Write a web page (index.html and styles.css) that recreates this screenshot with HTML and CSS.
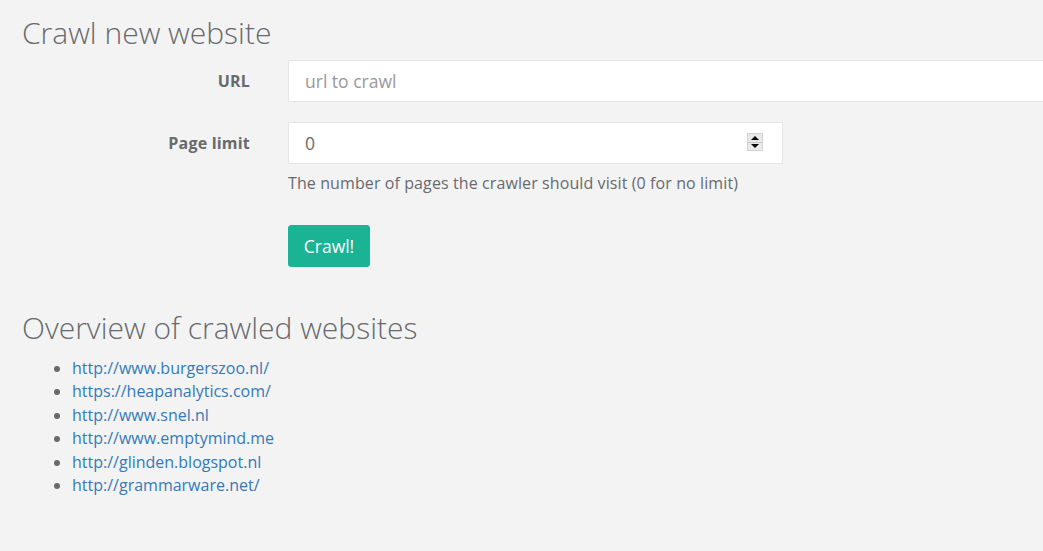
FILE: index.html
```html
<!DOCTYPE html>
<html>
<head>
<meta charset="utf-8">
<link rel="stylesheet" href="styles.css">
</head>
<body>
<div class="page">
  <h1 class="title">Crawl new website</h1>
  <form class="crawl-form">
    <div class="row">
      <label class="label" for="url">URL</label>
      <div class="field">
        <input class="control control-wide" id="url" type="text" placeholder="url to crawl">
      </div>
    </div>
    <div class="row">
      <label class="label" for="limit">Page limit</label>
      <div class="field">
        <div class="num-wrap">
          <input class="control control-num" id="limit" type="number" value="0">
          <span class="spinner" aria-hidden="true">
            <span class="spin-up"></span>
            <span class="spin-down"></span>
          </span>
        </div>
        <p class="help">The number of pages the crawler should visit (0 for no limit)</p>
      </div>
    </div>
    <div class="row">
      <div></div>
      <div class="field">
        <button class="btn" type="button">Crawl!</button>
      </div>
    </div>
  </form>
  <h1 class="title title-2">Overview of crawled websites</h1>
  <ul class="sites">
    <li><a href="#">http://www.burgerszoo.nl/</a></li>
    <li><a href="#">https://heapanalytics.com/</a></li>
    <li><a href="#">http://www.snel.nl</a></li>
    <li><a href="#">http://www.emptymind.me</a></li>
    <li><a href="#">http://glinden.blogspot.nl</a></li>
    <li><a href="#">http://grammarware.net/</a></li>
  </ul>
</div>
</body>
</html>
```
FILE: styles.css
```css
html, body {
  margin: 0;
  padding: 0;
  overflow: hidden;
  background: #f3f3f4;
}
body {
  font-family: "Open Sans", "Liberation Sans", sans-serif;
  color: #676a6c;
  font-size: 15px;
}
.page {
  padding: 0 0 0 22px;
}
.title {
  font-size: 30px;
  font-weight: 300;
  line-height: 1.1;
  margin: 0;
  padding-top: 16px;
  padding-bottom: 11px;
}
.title-2 {
  padding-top: 44px;
  padding-bottom: 13px;
}
.crawl-form {
  display: flex;
  flex-direction: column;
  gap: 20px;
}
.row {
  display: grid;
  grid-template-columns: 228px 1fr;
  column-gap: 38px;
  align-items: start;
}
.label {
  text-align: right;
  font-weight: 700;
  line-height: 42px;
  font-size: 16px;
  letter-spacing: 0.2px;
}
.field {
  display: flex;
  flex-direction: column;
}
.num-wrap {
  position: relative;
  width: 495px;
}
.control {
  box-sizing: border-box;
  height: 42px;
  border: 1px solid #e5e6e7;
  background: #fff;
  font-family: inherit;
  font-size: 17.5px;
  color: #676a6c;
  padding: 0 16px;
  outline: none;
  border-radius: 1px;
}
.control::placeholder {
  color: #999;
}
.control-wide {
  width: 900px;
}
.control-num {
  width: 495px;
  -moz-appearance: textfield;
}
.control-num::-webkit-outer-spin-button,
.control-num::-webkit-inner-spin-button {
  -webkit-appearance: none;
  margin: 0;
}
.spinner {
  position: absolute;
  left: 459px;
  top: 11px;
  width: 16px;
  height: 18px;
  box-sizing: border-box;
  border: 1px solid #d4d4d4;
  background: #e9e9e9;
  display: flex;
  flex-direction: column;
}
.spin-up, .spin-down {
  flex: 1;
  display: flex;
  align-items: center;
  justify-content: center;
}
.spin-up {
  border-bottom: 1px solid #c8c8c8;
}
.spin-up::before {
  content: "";
  border-left: 4px solid transparent;
  border-right: 4px solid transparent;
  border-bottom: 4px solid #000;
}
.spin-down::before {
  content: "";
  border-left: 4px solid transparent;
  border-right: 4px solid transparent;
  border-top: 4px solid #000;
}
.help {
  margin: 8px 0 0;
  font-size: 16px;
  line-height: 22px;
  letter-spacing: 0.1px;
}
.btn {
  align-self: flex-start;
  margin-top: 11px;
  background: #1ab394;
  border: 1px solid #1ab394;
  color: #fff;
  font-family: inherit;
  font-size: 17.5px;
  height: 42px;
  width: 82px;
  padding: 0;
  border-radius: 3px;
}
.sites {
  margin: 0;
  padding-left: 50px;
  font-size: 16px;
  line-height: 23.4px;
}
.sites a {
  color: #337ab7;
  text-decoration: none;
}
```
